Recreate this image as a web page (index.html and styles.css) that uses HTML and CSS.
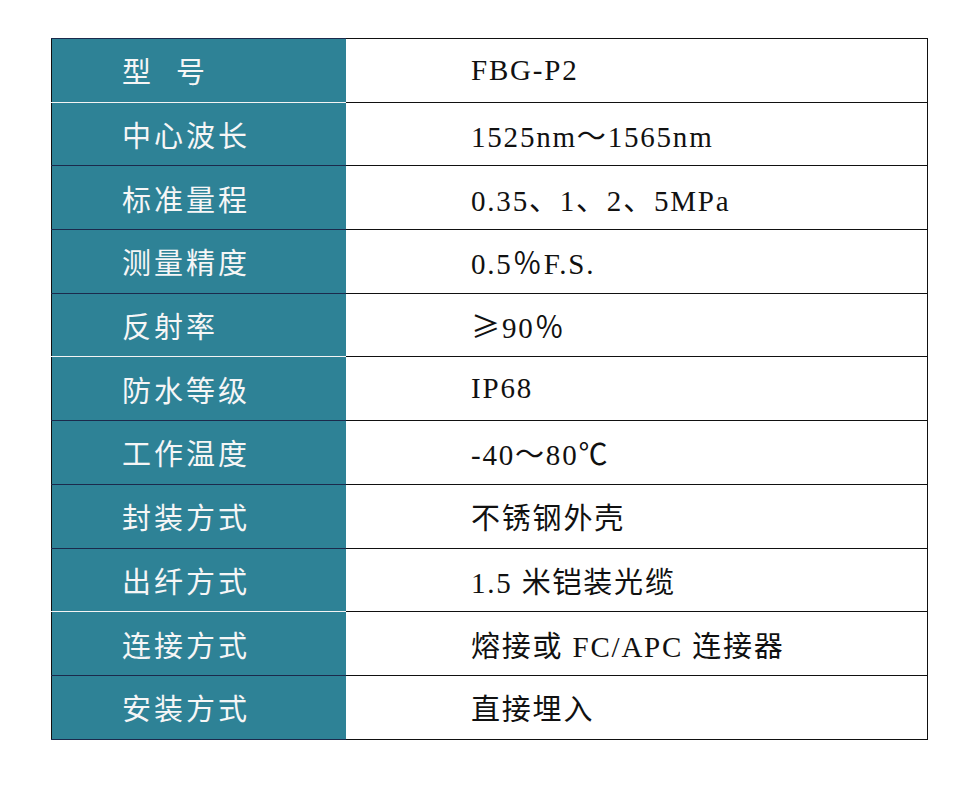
FILE: index.html
```html
<!DOCTYPE html>
<html lang="zh-CN">
<head>
<meta charset="utf-8">
<title>FBG-P2</title>
<link rel="stylesheet" href="styles.css">
</head>
<body>
<table class="spec">
  <tr><th class="sep-light">型<span class="gap"> </span>号</th><td>FBG-P2</td></tr>
  <tr><th>中心波长</th><td>1525nm～1565nm</td></tr>
  <tr><th>标准量程</th><td>0.35、1、2、5MPa</td></tr>
  <tr><th>测量精度</th><td>0.5<span class="cjk">％</span>F.S.</td></tr>
  <tr><th class="sep-light">反射率</th><td><span class="cjk">≥</span>90<span class="cjk">％</span></td></tr>
  <tr><th>防水等级</th><td>IP68</td></tr>
  <tr><th>工作温度</th><td>-40～80℃</td></tr>
  <tr><th>封装方式</th><td>不锈钢外壳</td></tr>
  <tr><th class="sep-light">出纤方式</th><td>1.5 米铠装光缆</td></tr>
  <tr><th>连接方式</th><td>熔接或 FC/APC 连接器</td></tr>
  <tr><th>安装方式</th><td>直接埋入</td></tr>
</table>
</body>
</html>
```
FILE: styles.css
```css
html, body {
  margin: 0;
  padding: 0;
  background: #ffffff;
}

body {
  padding: 38px 0 0 51px;
}

.spec {
  border-collapse: collapse;
  width: 877px;
  border: 1.5px solid #111;
}

.spec th,
.spec td {
  height: 62.7px;
  padding: 0;
  vertical-align: middle;
  text-align: left;
  border-top: 1px solid #111;
  border-bottom: 1px solid #111;
}

.spec th {
  width: 224px;
  padding-left: 70px;
  background: #2e8296;
  color: #f6f6f6;
  font-family: "Noto Sans CJK SC", sans-serif;
  font-weight: 400;
  font-size: 29px;
  letter-spacing: 3px;
  border-top-color: #1b2a4c;
  border-bottom-color: #1b2a4c;
  border-right: none;
}

.spec th.sep-light {
  border-bottom-color: #f4f4f4;
}

.spec .gap {
  display: inline-block;
  width: 22px;
}

.spec td {
  padding-left: 125px;
  color: #111;
  font-family: "Liberation Serif", "Noto Sans CJK SC", serif;
  font-size: 29px;
  letter-spacing: 1.8px;
}

.spec .cjk {
  font-family: "Noto Sans CJK SC", sans-serif;
  letter-spacing: 2px;
}
```
